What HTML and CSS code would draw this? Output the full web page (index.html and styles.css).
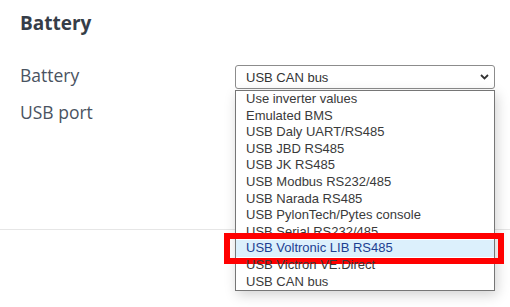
FILE: index.html
```html
<!DOCTYPE html>
<html>
<head>
<meta charset="utf-8">
<link rel="stylesheet" href="styles.css">
</head>
<body>
<section class="panel">
  <h2 class="title">Battery</h2>
  <div class="form">
    <div class="row">
      <label class="label">Battery</label>
      <div class="select-wrap">
        <div class="select">
          <span>USB CAN bus</span>
          <svg class="chevron" width="9" height="6" viewBox="0 0 9 6"><path d="M1 1 L4.5 4.5 L8 1" fill="none" stroke="#333" stroke-width="1.8"/></svg>
        </div>
        <ul class="dropdown">
          <li class="option">Use inverter values</li>
          <li class="option">Emulated BMS</li>
          <li class="option">USB Daly UART/RS485</li>
          <li class="option">USB JBD RS485</li>
          <li class="option">USB JK RS485</li>
          <li class="option">USB Modbus RS232/485</li>
          <li class="option">USB Narada RS485</li>
          <li class="option">USB PylonTech/Pytes console</li>
          <li class="option">USB Serial RS232/485</li>
          <li class="option option-hover">USB Voltronic LIB RS485</li>
          <li class="option">USB Victron VE.Direct</li>
          <li class="option">USB CAN bus</li>
        </ul>
      </div>
    </div>
    <div class="row">
      <label class="label">USB port</label>
      <div class="select-wrap">
        <div class="select"><span></span></div>
      </div>
    </div>
  </div>
</section>
</body>
</html>
```
FILE: styles.css
```css
html, body {
  margin: 0;
  padding: 0;
  background: #ffffff;
}
body {
  width: 510px;
  height: 307px;
  overflow: hidden;
}
.panel {
  padding: 10px 0 103px 20px;
  border-bottom: 1px solid #e6e6e6;
  font-family: "Open Sans", "Noto Sans", sans-serif;
}
.title {
  margin: 0;
  font-size: 19px;
  line-height: 26px;
  font-weight: 700;
  color: #363d48;
}
.form {
  margin-top: 29px;
  display: flex;
  flex-direction: column;
  gap: 13px;
}
.row {
  display: flex;
  align-items: flex-start;
}
.label {
  width: 215px;
  font-size: 17.5px;
  line-height: 20px;
  color: #4a5361;
}
.select-wrap {
  position: relative;
  width: 260px;
}
.select {
  box-sizing: border-box;
  height: 24px;
  border: 1px solid #8c8c8c;
  border-radius: 3px;
  padding: 0 5px 0 10px;
  display: flex;
  align-items: center;
  justify-content: space-between;
  font-family: "Liberation Sans", Arial, sans-serif;
  font-size: 13px;
  color: #333;
  background: #fff;
}
.chevron {
  display: block;
}
.dropdown {
  position: absolute;
  top: 25px;
  left: 0;
  width: 260px;
  box-sizing: border-box;
  margin: 0;
  padding: 0;
  list-style: none;
  border: 1px solid #767676;
  background: #fff;
  box-shadow: 2px 4px 12px rgba(0, 0, 0, 0.18);
  font-family: "Liberation Sans", Arial, sans-serif;
  font-size: 13px;
  color: #3a3a3a;
  z-index: 5;
}
.option {
  height: 16.6px;
  line-height: 16.6px;
  padding-left: 10px;
  white-space: nowrap;
  position: relative;
}
.option-hover {
  background: #dcf0fc;
  color: #1d3f92;
}
.option-hover::after {
  content: "";
  position: absolute;
  left: -12px;
  right: -10px;
  top: -7px;
  bottom: -7px;
  border: 6px solid #ff0000;
}
```
